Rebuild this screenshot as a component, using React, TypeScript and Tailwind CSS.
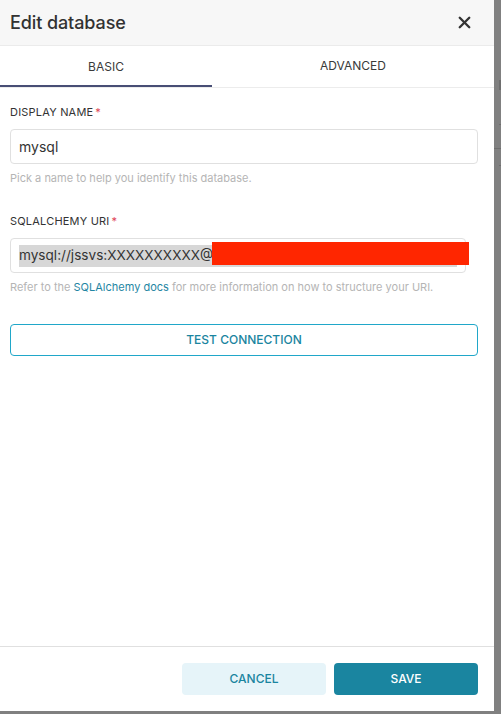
import { X } from "lucide-react"

function Label({ text }: { text: string }) {
    return (
        <div className="text-[11px] leading-4 text-[#333] tracking-[0.2px]">
            {text}
            <span className="text-[#e04355] ml-[2px]">*</span>
        </div>
    )
}

export default function App() {
    return (
        <div
            className="relative w-[501px] h-[714px] bg-[#808080] overflow-hidden"
            style={{ fontFamily: "Inter, 'Liberation Sans', sans-serif" }}
        >
            {/* dimmed page behind the modal */}
            <div className="absolute left-[499px] top-[80px] w-[2px] h-[10px] bg-[#6e6e6e]" />
            <div className="absolute left-[494px] top-[148px] w-[7px] h-px bg-[#6e6e6e]" />
            <div className="absolute left-[499px] top-[124px] w-[2px] h-px bg-[#6e6e6e]" />
            <div className="absolute left-[499px] top-[165px] w-[2px] h-px bg-[#6e6e6e]" />

            <div className="w-[494px] h-[711px] bg-white flex flex-col">
                <div className="h-[46px] shrink-0 bg-[#f7f7f7] border-b border-[#ebebeb] pl-[10px] pr-[20px] flex items-center justify-between">
                    <h1 className="text-[18px] font-medium text-[#323232] tracking-[-0.1px]">Edit database</h1>
                    <X className="w-[19px] h-[19px] text-[#333]" strokeWidth={3} />
                </div>

                <div className="h-[42px] shrink-0 flex border-b border-[#ececec]">
                    <div className="w-[212px] flex items-center justify-center text-[12px] text-[#3a3a3a] border-b-2 border-[#484e75] pt-[2px]">
                        BASIC
                    </div>
                    <div className="flex-1 flex items-center justify-center text-[12px] text-[#3a3a3a] pb-px">
                        ADVANCED
                    </div>
                </div>

                <div className="flex-1 pl-[10px] pr-[16px] pt-[16px]">
                    <Label text="DISPLAY NAME" />
                    <div className="mt-[9px] h-[35px] rounded-[4px] border border-[#e0e0e0] flex items-center px-[8px] text-[14px] text-[#333]">
                        mysql
                    </div>
                    <div className="mt-[6px] text-[11px] text-[#b5b5b5]">Pick a name to help you identify this database.</div>

                    <div className="mt-[26px]">
                        <Label text="SQLALCHEMY URI" />
                    </div>
                    <div className="mt-[9px] w-[456px] h-[35px] rounded-[4px] border border-[#e0e0e0] relative">
                        <div className="absolute left-[8px] top-[6px] w-[438px] h-[22px] bg-[#d7d7d7]" />
                        <div className="absolute left-[8px] top-[6px] h-[22px] flex items-center text-[13.6px] text-[#333]">
                            mysql://jssvs:XXXXXXXXXX@
                        </div>
                        <div className="absolute left-[201px] top-[3px] w-[257px] h-[23px] bg-[#ff2600]" />
                    </div>
                    <div className="mt-[6px] text-[11px] text-[#b5b5b5]">
                        Refer to the <span className="text-[#1f86a3]">SQLAlchemy docs</span> for more information on how to structure your URI.
                    </div>

                    <button className="mt-[29px] w-full h-[32px] rounded-[4px] border border-[#20a7c9] text-[12px] font-medium text-[#1a85a0] flex items-center justify-center">
                        TEST CONNECTION
                    </button>
                </div>

                <div className="h-[65px] shrink-0 border-t border-[#e0e0e0] pr-[16px] pt-[16px] flex justify-end gap-[8px]">
                    <button className="w-[144px] h-[32px] rounded-[4px] bg-[#e6f4f9] text-[12px] font-medium text-[#1a85a0]">
                        CANCEL
                    </button>
                    <button className="w-[144px] h-[32px] rounded-[4px] bg-[#1a85a0] text-[12px] font-medium text-white">
                        SAVE
                    </button>
                </div>
            </div>
        </div>
    )
}
